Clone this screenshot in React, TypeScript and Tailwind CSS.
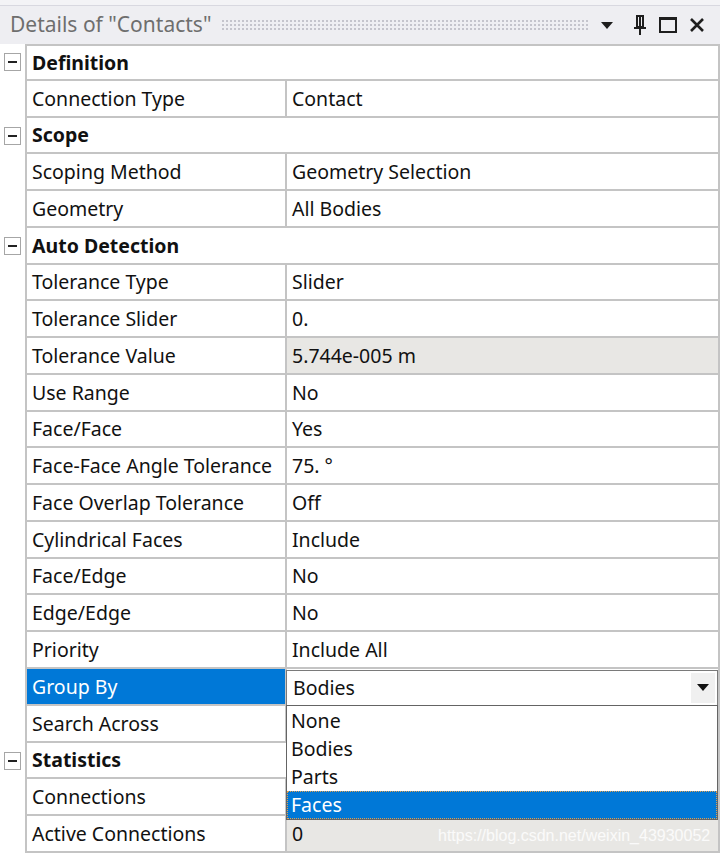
import React from 'react';

type Row =
  | { kind: 'group'; label: string }
  | { kind: 'prop'; label: string; value: string; readOnly?: boolean; selected?: boolean };

const rows: Row[] = [
  { kind: 'group', label: 'Definition' },
  { kind: 'prop', label: 'Connection Type', value: 'Contact' },
  { kind: 'group', label: 'Scope' },
  { kind: 'prop', label: 'Scoping Method', value: 'Geometry Selection' },
  { kind: 'prop', label: 'Geometry', value: 'All Bodies' },
  { kind: 'group', label: 'Auto Detection' },
  { kind: 'prop', label: 'Tolerance Type', value: 'Slider' },
  { kind: 'prop', label: 'Tolerance Slider', value: '0.' },
  { kind: 'prop', label: 'Tolerance Value', value: '5.744e-005 m', readOnly: true },
  { kind: 'prop', label: 'Use Range', value: 'No' },
  { kind: 'prop', label: 'Face/Face', value: 'Yes' },
  { kind: 'prop', label: 'Face-Face Angle Tolerance', value: '75. °' },
  { kind: 'prop', label: 'Face Overlap Tolerance', value: 'Off' },
  { kind: 'prop', label: 'Cylindrical Faces', value: 'Include' },
  { kind: 'prop', label: 'Face/Edge', value: 'No' },
  { kind: 'prop', label: 'Edge/Edge', value: 'No' },
  { kind: 'prop', label: 'Priority', value: 'Include All' },
  { kind: 'prop', label: 'Group By', value: '', selected: true },
  { kind: 'prop', label: 'Search Across', value: '' },
  { kind: 'group', label: 'Statistics' },
  { kind: 'prop', label: 'Connections', value: '', readOnly: true },
  { kind: 'prop', label: 'Active Connections', value: '0', readOnly: true },
];

const MinusBox = () => (
  <div className="w-[17px] h-[18px] border border-[#a6a6a6] bg-white flex items-center justify-center">
    <div className="w-[9px] h-[2px] bg-[#222]" />
  </div>
);

const TitleIcons = () => (
  <div className="flex items-center gap-[10px] pr-[14px]">
    <svg width="14" height="10" viewBox="0 0 14 10">
      <path d="M1 2 L13 2 L7 9 Z" fill="#1e1e1e" />
    </svg>
    <svg width="16" height="22" viewBox="0 0 16 22" className="ml-[8px]">
      <path d="M5 2 H11 V13 H5 Z M8 2 V13" fill="none" stroke="#1e1e1e" strokeWidth="2" />
      <path d="M2 14 H14" stroke="#1e1e1e" strokeWidth="2" />
      <path d="M8 14 V21" stroke="#1e1e1e" strokeWidth="2" />
    </svg>
    <svg width="20" height="18" viewBox="0 0 20 18">
      <rect x="2" y="2" width="16" height="14" fill="none" stroke="#1e1e1e" strokeWidth="2" />
      <path d="M2 3 H18" stroke="#1e1e1e" strokeWidth="2" />
    </svg>
    <svg width="18" height="18" viewBox="0 0 18 18">
      <path d="M3 3 L15 15 M15 3 L3 15" stroke="#1e1e1e" strokeWidth="2.6" />
    </svg>
  </div>
);

export default function App() {
  return (
    <div
      className="relative w-[720px] h-[857px] bg-white overflow-hidden text-[19.5px] text-[#111]"
      style={{ fontFamily: '"Noto Sans", "Open Sans", sans-serif' }}
    >
      <div className="h-[6px] bg-[#f3f3f6] border-b border-[#d8d8e0]" />
      <div className="h-[38px] bg-[#eeeef2] flex items-center">
        <span className="pl-[10px] pr-[10px] text-[21px] text-[#6e6e6e] whitespace-nowrap">
          Details of "Contacts"
        </span>
        <div className="flex-1 h-[12px] mr-[12px] bg-[radial-gradient(circle,#c4c4cc_0.9px,transparent_1.2px)] bg-size-[4px_4px]" />
        <TitleIcons />
      </div>

      <div className="flex flex-col">
        {rows.map((r, i) => (
          <div key={i} className="flex h-[36.77px]">
            <div className="w-[25px] flex items-center justify-center shrink-0">
              {r.kind === 'group' && <MinusBox />}
            </div>
            <div
              className={
                'flex-1 flex border-l-2 border-r-2 border-b-2 border-[#c4c4c4] ' +
                (i === 0 ? 'border-t-2' : '')
              }
            >
              {r.kind === 'group' ? (
                <div className="flex-1 flex items-center pl-[5px] font-bold">{r.label}</div>
              ) : (
                <>
                  <div
                    className={
                      'w-[260px] shrink-0 flex items-center pl-[5px] border-r-2 border-[#c4c4c4] whitespace-nowrap ' +
                      (r.selected ? 'bg-[#0078d7] text-white' : '')
                    }
                  >
                    {r.label}
                  </div>
                  <div
                    className={
                      'flex-1 flex items-center pl-[5px] whitespace-nowrap ' +
                      (r.readOnly ? 'bg-[#e8e7e4]' : '')
                    }
                  >
                    {r.value}
                  </div>
                </>
              )}
            </div>
          </div>
        ))}
      </div>

      {/* combo box for Group By */}
      <div className="absolute left-[286px] top-[670px] w-[432px] h-[36px] bg-white border border-[#7a7a7a] flex items-center">
        <span className="pl-[6px] flex-1">Bodies</span>
        <div className="w-[24px] h-[30px] mr-[2px] bg-[#f0f0f0] flex items-center justify-center">
          <svg width="12" height="8" viewBox="0 0 12 8">
            <path d="M0 0 H12 L6 7 Z" fill="#111" />
          </svg>
        </div>
      </div>

      {/* open list */}
      <div className="absolute left-[286px] top-[705px] w-[432px] h-[115px] bg-white border border-[#646464] flex flex-col py-[1px]">
        {['None', 'Bodies', 'Parts', 'Faces'].map((o) => (
          <div
            key={o}
            className={
              'h-[28px] flex items-center pl-[4px] ' +
              (o === 'Faces'
                ? 'bg-[#0078d7] text-white outline-1 outline-dotted outline-[#e0a050] -outline-offset-1'
                : '')
            }
          >
            {o}
          </div>
        ))}
      </div>

      <div
        className="absolute left-[438px] top-[824px] text-[16px] text-white/80 whitespace-nowrap"
        style={{ fontFamily: '"Liberation Sans", Arial, sans-serif' }}
      >
        https://blog.csdn.net/weixin_43930052
      </div>
    </div>
  );
}
